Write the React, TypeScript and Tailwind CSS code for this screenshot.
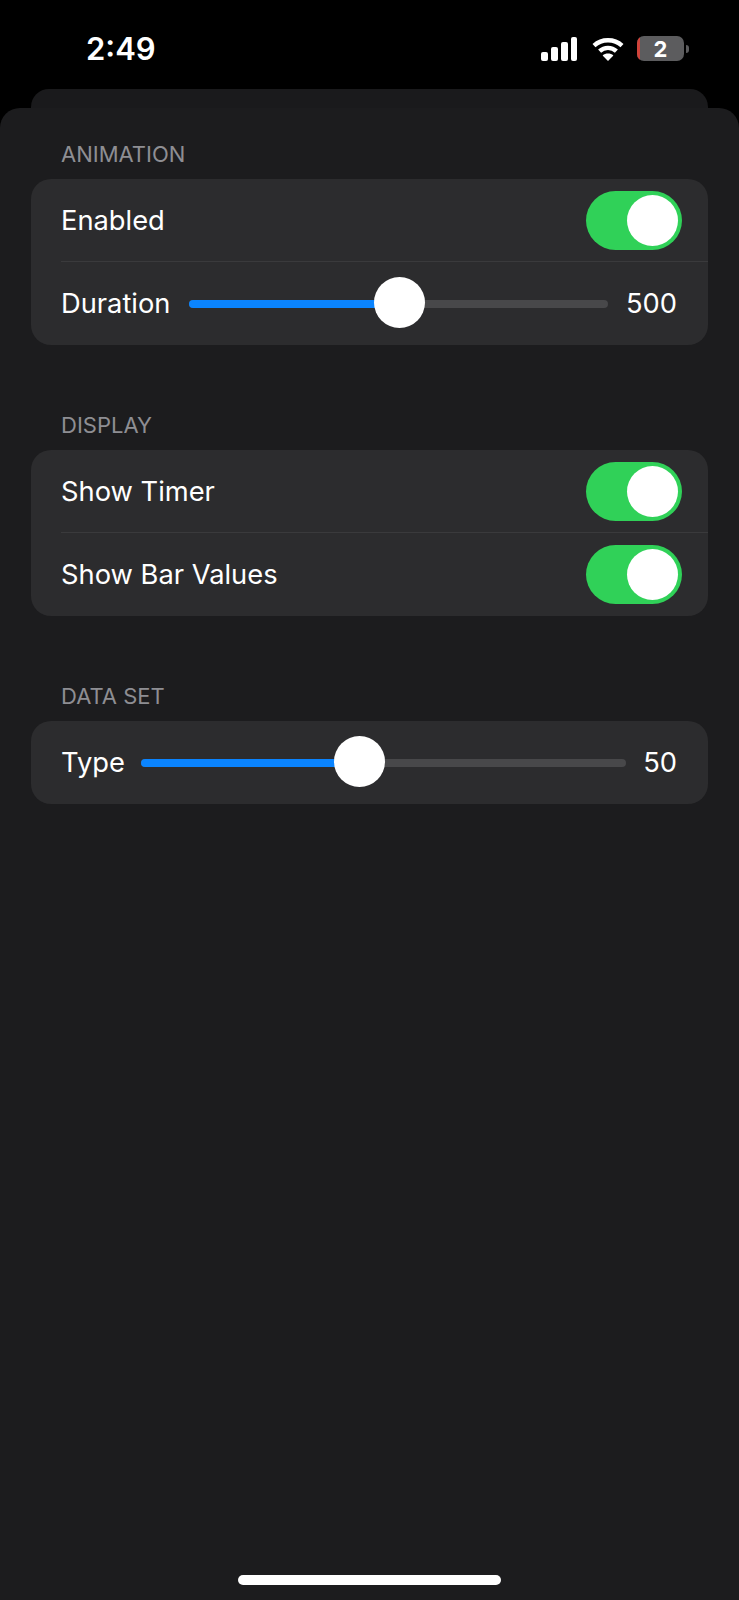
const FONT = "font-['Inter','Liberation_Sans',sans-serif]";

const Toggle = () => (
  <div className="relative w-[96px] h-[59px] rounded-full bg-[#30d158] shrink-0">
    <div className="absolute right-[4px] top-[4px] w-[51px] h-[51px] rounded-full bg-white" />
  </div>
);

const Slider = ({ percent, value, gaps }: { percent: number; value: string; gaps: string }) => (
  <div className="flex-1 flex items-center mr-[5px]">
    <div className={`relative flex-1 h-[8px] mt-[1px] rounded-full bg-[#48484a] ${gaps}`}>
      <div className="h-full rounded-full bg-[#0a84ff]" style={{ width: `${percent}%` }} />
      <div
        className="absolute top-1/2 w-[51px] h-[51px] -ml-[25px] -mt-[27px] rounded-full bg-white"
        style={{ left: `${percent}%` }}
      />
    </div>
    <span className="mt-[1px] text-[27.3px] leading-[34px] text-white">{value}</span>
  </div>
);

const Row = ({ label, children, divider }: { label: string; children: React.ReactNode; divider?: boolean }) => (
  <div className="pl-[30px]">
    <div className={`flex items-center h-[83px] pr-[26px] ${divider ? "border-b border-[#3a3a3c]" : ""}`}>
      <span className="mt-[1px] text-[27.3px] leading-[34px] text-white whitespace-nowrap">{label}</span>
      {children}
    </div>
  </div>
);

const Section = ({ title, children }: { title: string; children: React.ReactNode }) => (
  <section className="mb-[67px]">
    <h2 className="pl-[61px] pb-[11px] text-[22px] leading-[27px] font-normal text-[#8e8e93]">{title}</h2>
    <div className="mx-[31px] rounded-[20px] bg-[#2c2c2e] overflow-hidden">{children}</div>
  </section>
);

const StatusIcons = () => (
  <div className="flex items-center">
    <svg width="36" height="24" viewBox="0 0 36 24" fill="white">
      <rect x="0" y="15" width="7" height="9" rx="2" />
      <rect x="10" y="10" width="7" height="14" rx="2" />
      <rect x="20" y="5" width="7" height="19" rx="2" />
      <rect x="30" y="0" width="6" height="24" rx="2" />
    </svg>
    <svg className="ml-[15px]" width="32" height="24" viewBox="0 0 32 24" fill="none" stroke="white" strokeWidth="4.4">
      <path d="M2 8.6C9.8 1.4 22.2 1.4 30 8.6" />
      <path d="M7.6 14.2C12.4 9.8 19.6 9.8 24.4 14.2" />
      <path d="M16 24L10.6 18.4C13.6 15.8 18.4 15.8 21.4 18.4Z" fill="white" stroke="none" />
    </svg>
    <div className="relative ml-[13px] w-[47px] h-[25px] rounded-[7px] bg-[#5c5c5e] overflow-hidden flex items-center justify-center">
      <div className="absolute left-0 top-0 bottom-0 w-[3px] bg-[#d0433a]" />
      <span className="text-[22px] leading-none font-bold text-white">2</span>
    </div>
    <div className="ml-[2px] w-[3px] h-[8px] rounded-r-full bg-[#5c5c5e]" />
  </div>
);

export default function App() {
  return (
    <div className={`${FONT} w-[739px] h-[1600px] bg-black flex flex-col overflow-hidden`}>
      <header className="h-[89px] shrink-0 flex items-start justify-between pl-[86px] pr-[50px] pt-[30px]">
        <span className="text-[31px] leading-[38px] font-semibold text-white">2:49</span>
        <div className="pt-[6px]">
          <StatusIcons />
        </div>
      </header>

      <div className="mx-[31px] h-[40px] shrink-0 rounded-t-[18px] bg-[#1a1a1c]" />

      <main className="-mt-[21px] flex-1 flex flex-col rounded-t-[20px] bg-[#1c1c1e] pt-[33px]">
        <Section title="ANIMATION">
          <Row label="Enabled" divider>
            <div className="flex-1" />
            <Toggle />
          </Row>
          <Row label="Duration">
            <Slider percent={50} value="500" gaps="ml-[19px] mr-[18px]" />
          </Row>
        </Section>

        <Section title="DISPLAY">
          <Row label="Show Timer" divider>
            <div className="flex-1" />
            <Toggle />
          </Row>
          <Row label="Show Bar Values">
            <div className="flex-1" />
            <Toggle />
          </Row>
        </Section>

        <Section title="DATA SET">
          <Row label="Type">
            <Slider percent={45} value="50" gaps="ml-[16px] mr-[17px]" />
          </Row>
        </Section>

        <div className="mt-auto mb-[15px] mx-auto w-[263px] h-[10px] rounded-full bg-white" />
      </main>
    </div>
  );
}
